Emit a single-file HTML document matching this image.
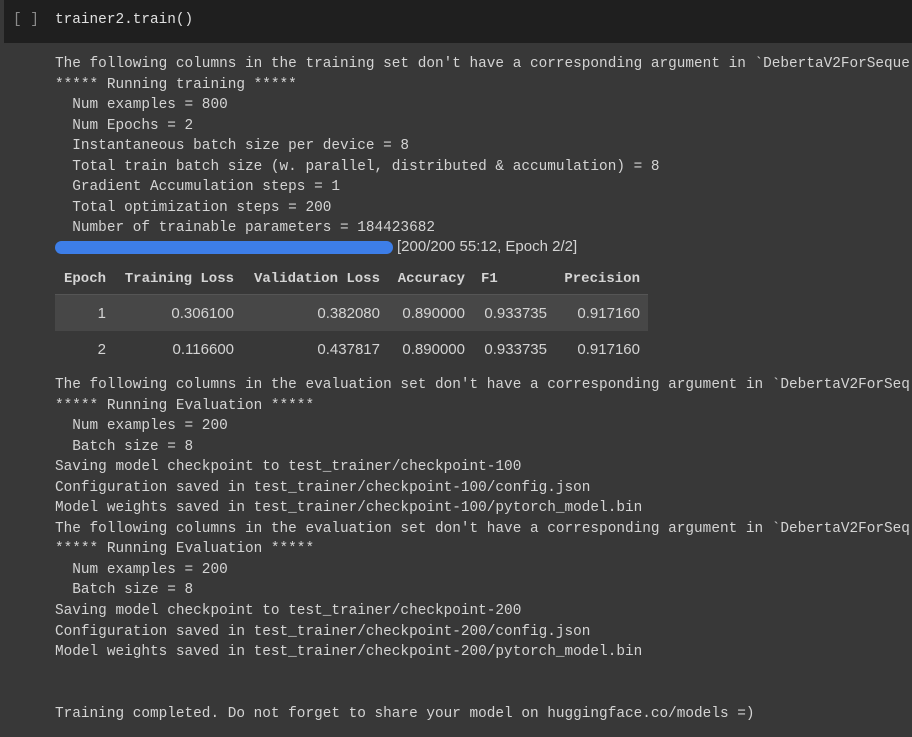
<!DOCTYPE html>
<html><head><meta charset="utf-8"><style>
html,body{margin:0;padding:0;width:912px;height:737px;overflow:hidden;background:#383838;position:relative;}
.top{position:absolute;left:4px;top:0;width:908px;height:43px;background:#1f1f1f;}
.mono{font-family:"Liberation Mono",monospace;font-size:14.4px;color:#d4d4d4;white-space:pre;}
.br{position:absolute;left:13px;top:12px;color:#8a8a8a;}
.code{position:absolute;left:55px;top:12px;color:#e0e0e0;}
pre{margin:0;position:absolute;left:55px;width:857px;overflow:hidden;line-height:20.55px;}
.bar{position:absolute;left:55px;top:241px;width:338px;height:13px;border-radius:7px;background:#3d7ee8;}
.pt{position:absolute;left:397px;top:238px;font-family:"Liberation Sans",sans-serif;font-size:15px;color:#d4d4d4;}
table{position:absolute;left:55px;top:263px;width:593px;border-collapse:collapse;table-layout:fixed;font-family:"Liberation Sans",sans-serif;font-size:15px;color:#d4d4d4;}
th{font-family:"Liberation Mono",monospace;font-weight:bold;font-size:14px;height:31px;text-align:right;padding:0 8px 0 0;border-bottom:1px solid #555;white-space:nowrap;}
td{height:36px;text-align:right;padding:0 8px 0 0;white-space:nowrap;}
tr.a td{background:#474747;}
</style></head><body>
<div class="top"></div>
<div class="mono br">[ ]</div>
<div class="mono code">trainer2.train()</div>
<pre class="mono" style="top:54px">The following columns in the training set don't have a corresponding argument in `DebertaV2ForSeque
***** Running training *****
  Num examples = 800
  Num Epochs = 2
  Instantaneous batch size per device = 8
  Total train batch size (w. parallel, distributed &amp; accumulation) = 8
  Gradient Accumulation steps = 1
  Total optimization steps = 200
  Number of trainable parameters = 184423682</pre>
<div class="bar"></div>
<div class="pt">[200/200 55:12, Epoch 2/2]</div>
<table>
<colgroup><col style="width:59px"><col style="width:128px"><col style="width:146px"><col style="width:85px"><col style="width:82px"><col style="width:93px"></colgroup>
<tr><th>Epoch</th><th>Training Loss</th><th>Validation Loss</th><th>Accuracy</th><th style="text-align:left;padding-left:8px">F1</th><th>Precision</th></tr>
<tr class="a"><td>1</td><td>0.306100</td><td>0.382080</td><td>0.890000</td><td>0.933735</td><td>0.917160</td></tr>
<tr><td>2</td><td>0.116600</td><td>0.437817</td><td>0.890000</td><td>0.933735</td><td>0.917160</td></tr>
</table>
<pre class="mono" style="top:375px">The following columns in the evaluation set don't have a corresponding argument in `DebertaV2ForSeq
***** Running Evaluation *****
  Num examples = 200
  Batch size = 8
Saving model checkpoint to test_trainer/checkpoint-100
Configuration saved in test_trainer/checkpoint-100/config.json
Model weights saved in test_trainer/checkpoint-100/pytorch_model.bin
The following columns in the evaluation set don't have a corresponding argument in `DebertaV2ForSeq
***** Running Evaluation *****
  Num examples = 200
  Batch size = 8
Saving model checkpoint to test_trainer/checkpoint-200
Configuration saved in test_trainer/checkpoint-200/config.json
Model weights saved in test_trainer/checkpoint-200/pytorch_model.bin


Training completed. Do not forget to share your model on huggingface.co/models =)</pre>
</body></html>
